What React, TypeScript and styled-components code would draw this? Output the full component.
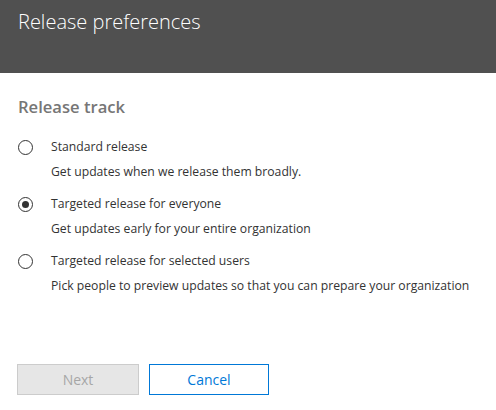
import React, { FC, useState } from 'react';
import styled, { createGlobalStyle } from 'styled-components';

const GlobalStyle = createGlobalStyle`
  html, body {
    margin: 0;
    padding: 0;
    background: #ffffff;
  }
  body {
    font-family: 'Open Sans', 'Noto Sans', sans-serif;
    color: #333333;
  }
`;

const Panel = styled.div`
  width: 496px;
  height: 410px;
  display: flex;
  flex-direction: column;
  background: #ffffff;
`;

const Header = styled.div`
  height: 73px;
  background: #505050;
  padding: 8px 18px 0;
  box-sizing: border-box;
`;

const Title = styled.h1`
  margin: 0;
  font-size: 20px;
  font-weight: 300;
  color: #ffffff;
  line-height: 28px;
`;

const Body = styled.div`
  flex: 1;
  padding: 22px 18px 0;
  display: flex;
  flex-direction: column;
`;

const SectionTitle = styled.h2`
  margin: 0 0 19px;
  font-size: 16.6px;
  font-weight: 600;
  color: #767676;
  line-height: 24px;
`;

const Options = styled.div`
  display: flex;
  flex-direction: column;
  gap: 14px;
`;

const Option = styled.label`
  display: grid;
  grid-template-columns: 33px 1fr;
  row-gap: 7px;
  cursor: pointer;
`;

const Circle = styled.span<{ $checked: boolean }>`
  width: 15px;
  height: 15px;
  box-sizing: border-box;
  border: 1px solid #333333;
  border-radius: 50%;
  display: flex;
  align-items: center;
  justify-content: center;
  align-self: center;
  &::after {
    content: '';
    width: 7px;
    height: 7px;
    border-radius: 50%;
    background: ${(p) => (p.$checked ? '#333333' : 'transparent')};
  }
`;

const Label = styled.span`
  font-size: 12.2px;
  line-height: 18px;
  color: #333333;
`;

const Description = styled.span`
  grid-column: 2;
  font-size: 12.2px;
  line-height: 18px;
  color: #333333;
  white-space: nowrap;
`;

const Footer = styled.div`
  display: flex;
  gap: 10px;
  padding: 0 17px 15px;
`;

const Button = styled.button<{ $primary?: boolean }>`
  width: ${(p) => (p.$primary ? '122px' : '120px')};
  height: 31px;
  box-sizing: border-box;
  font-family: inherit;
  font-size: 14px;
  padding: 0;
  background: ${(p) => (p.$primary ? '#e6e6e6' : '#ffffff')};
  border: 1px solid ${(p) => (p.$primary ? '#cccccc' : '#0078d7')};
  color: ${(p) => (p.$primary ? '#a6a6a6' : '#0078d7')};
  cursor: ${(p) => (p.$primary ? 'default' : 'pointer')};
`;

const options = [
  { id: 'standard', label: 'Standard release', description: 'Get updates when we release them broadly.' },
  { id: 'everyone', label: 'Targeted release for everyone', description: 'Get updates early for your entire organization' },
  { id: 'selected', label: 'Targeted release for selected users', description: 'Pick people to preview updates so that you can prepare your organization' },
];

const App: FC = () => {
  const [track, setTrack] = useState('everyone');
  return (
    <Panel>
      <GlobalStyle />
      <Header>
        <Title>Release preferences</Title>
      </Header>
      <Body>
        <SectionTitle>Release track</SectionTitle>
        <Options>
          {options.map((o) => (
            <Option key={o.id} onClick={() => setTrack(o.id)}>
              <Circle $checked={track === o.id} />
              <Label>{o.label}</Label>
              <Description>{o.description}</Description>
            </Option>
          ))}
        </Options>
      </Body>
      <Footer>
        <Button $primary disabled>Next</Button>
        <Button>Cancel</Button>
      </Footer>
    </Panel>
  );
};

export default App;
